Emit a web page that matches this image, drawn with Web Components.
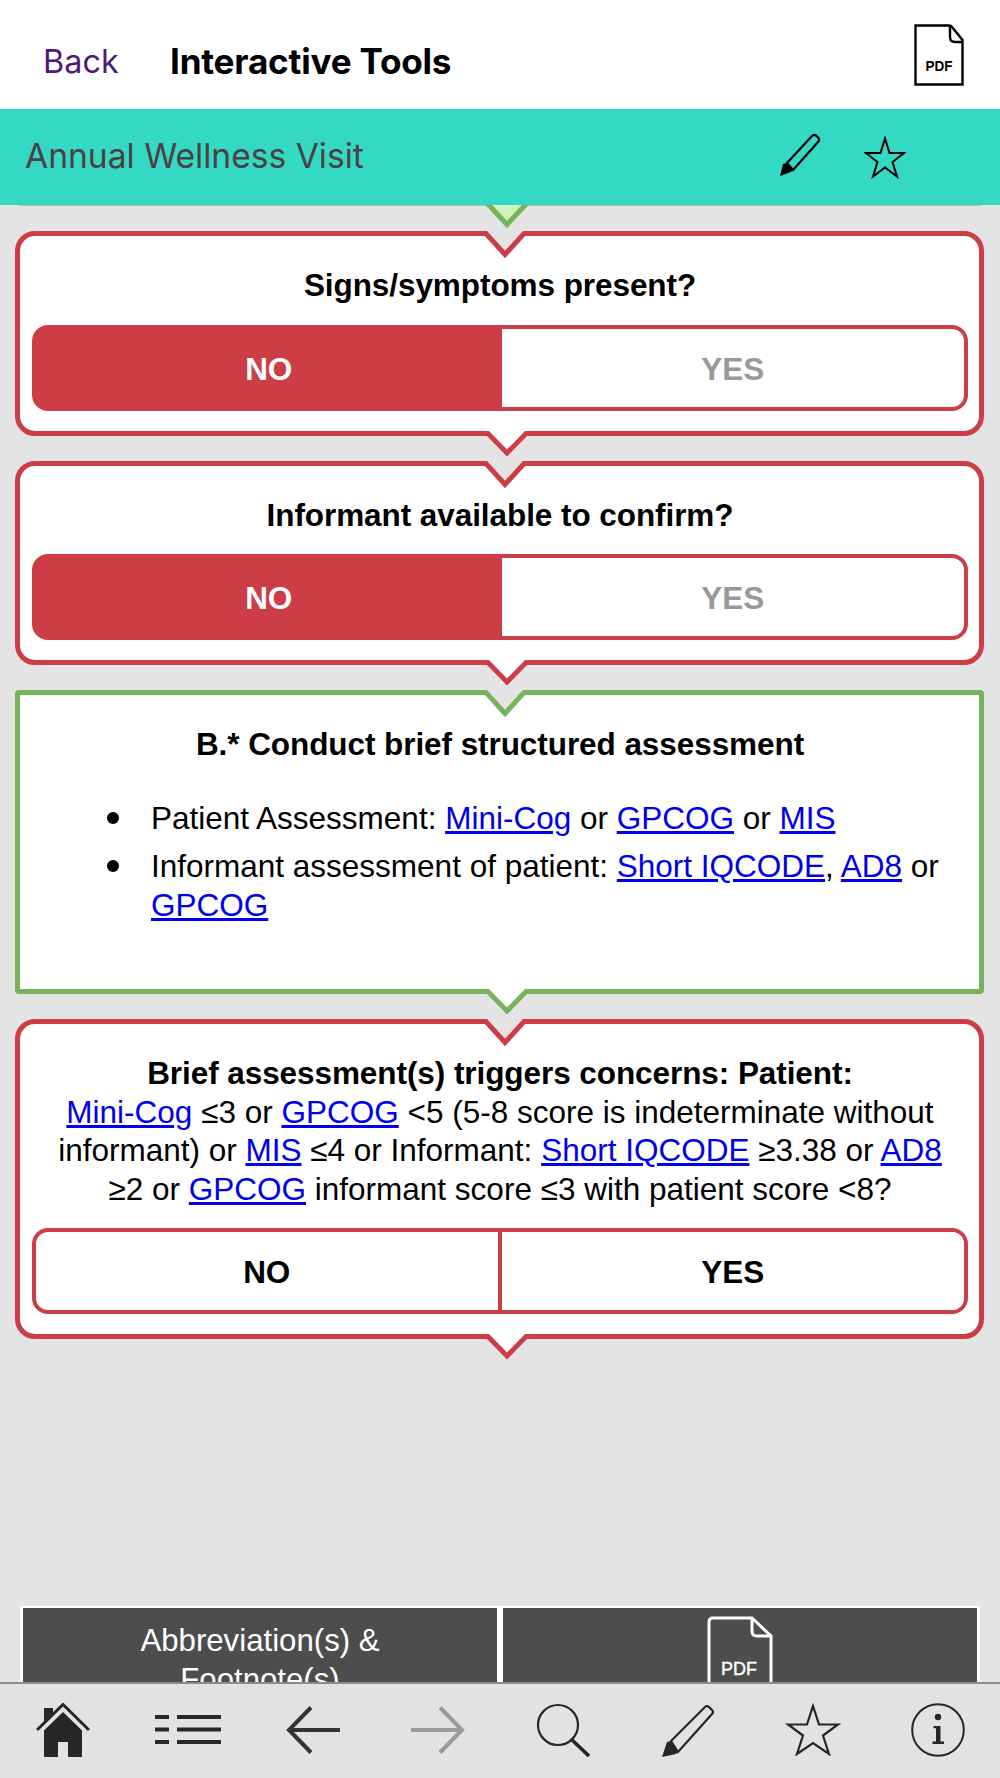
<!DOCTYPE html>
<html lang="en">
<head>
<meta charset="utf-8">
<title>Interactive Tools</title>
<style>
    html, body { margin: 0; height: 100%; background: #e4e4e4; }
    body { font-family: "Liberation Sans", Arial, sans-serif; color: #000; }
    b { letter-spacing: -0.07px; }
</style>
</head>
<body>
<app-shell>
    <top-bar slot="top" title="Interactive Tools"></top-bar>
    <sub-bar slot="top" title="Annual Wellness Visit"></sub-bar>

    <flow-tail></flow-tail>

    <flow-card tone="red">
        <question-text><b>Signs/symptoms present?</b></question-text>
        <yes-no picked="no"></yes-no>
    </flow-card>

    <flow-card tone="red">
        <question-text><b>Informant available to confirm?</b></question-text>
        <yes-no picked="no"></yes-no>
    </flow-card>

    <flow-card tone="green">
        <question-text><b>B.* Conduct brief structured assessment</b></question-text>
        <bullet-list>
            <bullet-item>Patient Assessment: <a href="#">Mini-Cog</a> or <a href="#">GPCOG</a> or <a href="#">MIS</a></bullet-item>
            <bullet-item>Informant assessment of patient: <a href="#">Short IQCODE</a>, <a href="#">AD8</a> or <a href="#">GPCOG</a></bullet-item>
        </bullet-list>
    </flow-card>

    <flow-card tone="red">
        <question-text><b>Brief assessment(s) triggers concerns: Patient:</b><br><a href="#">Mini-Cog</a> ≤3 or <a href="#">GPCOG</a> &lt;5 (5-8 score is indeterminate without informant) or <a href="#">MIS</a> ≤4 or Informant: <a href="#">Short IQCODE</a> ≥3.38 or <a href="#">AD8</a> ≥2 or <a href="#">GPCOG</a> informant score ≤3 with patient score &lt;8?</question-text>
        <yes-no></yes-no>
    </flow-card>

    <foot-buttons></foot-buttons>

    <tab-bar slot="bottom"></tab-bar>
</app-shell>

<script>
// Icon drawings, each one sized by its own viewBox
const ICONS = {
    home: '<svg width="54" height="54" viewBox="0 0 54 54"><path d="M1 27 L27 1.5 L53 27" fill="none" stroke="#262626" stroke-width="3"/><path d="M8 54 V27.5 L27 9 L46 27.5 V54 H32 V39 H22 V54 Z M8 5 H17 V11 L8 20 Z" fill="#262626"/></svg>',
    list: '<svg width="66" height="29" viewBox="0 0 66 29"><path d="M0 2 H14 M22 2 H66 M0 14.5 H14 M22 14.5 H66 M0 27 H14 M22 27 H66" stroke="#262626" stroke-width="4"/></svg>',
    back: '<svg width="54" height="48" viewBox="0 0 54 48"><path d="M54 24 H3 M25 1.5 L3 24 L25 46.5" fill="none" stroke="#333" stroke-width="4"/></svg>',
    forward: '<svg width="54" height="48" viewBox="0 0 54 48"><path d="M0 24 H51 M29 1.5 L51 24 L29 46.5" fill="none" stroke="#9b9b9b" stroke-width="4"/></svg>',
    search: '<svg width="54" height="54" viewBox="0 0 54 54"><circle cx="22" cy="22" r="20" fill="none" stroke="#262626" stroke-width="2.2"/><path d="M35 36 L53 53" stroke="#262626" stroke-width="3.6"/></svg>',
    pencil: '<svg width="54" height="54" viewBox="0 0 54 54"><path d="M10 38 L44 4 Q46 2 48 4 L51 7 Q53 9 51 11 L17 49 Z" fill="none" stroke="#262626" stroke-width="2.2"/><path d="M1 54 L6 39 L10 38 L17 49 L15 51 Z" fill="#262626"/></svg>',
    star: '<svg width="56" height="53" viewBox="0 0 56 53"><path d="M28 3 L34 21.5 H53 L38 32.5 L44 51 L28 40 L12 51 L18 32.5 L3 21.5 H22 Z" fill="none" stroke="#262626" stroke-width="2.2"/></svg>',
    info: '<svg width="54" height="54" viewBox="0 0 54 54"><circle cx="27" cy="27" r="25.8" fill="none" stroke="#262626" stroke-width="2"/><circle cx="27" cy="14" r="3.2" fill="#262626"/><path d="M22.5 23 H29.5 V38.5 H33 V41 H21.5 V38.5 H25 V25.2 H22.5 Z" fill="#262626"/></svg>',
    // Versiones pequeñas de la barra turquesa
    penSmall: '<svg width="42" height="43" viewBox="0 0 42 43"><path d="M8 30 L33 3 Q35 1 37 2.5 L39.5 5 Q41 7 39 9 L14 37 Z" fill="none" stroke="#000" stroke-width="2.2"/><path d="M1 43 L4 31 L8 30 L14 37 L12 39 Z" fill="#000"/></svg>',
    starSmall: '<svg width="42" height="43" viewBox="0 0 42 43"><path d="M21 2.5 L25.5 17 H40 L28.5 26 L33 40.5 L21 31.5 L9 40.5 L13.5 26 L2 17 H16.5 Z" fill="none" stroke="#000" stroke-width="2"/></svg>',
    pdfDark: '<svg width="50" height="62" viewBox="0 0 50 62"><path d="M1.5 1.5 H35 Q37 1.5 38 3 L48.5 16 V60.5 H1.5 Z" fill="#fff" stroke="#000" stroke-width="2.4"/><path d="M36 2 V13 Q36 18 41 18 H48.5" fill="none" stroke="#000" stroke-width="2.4"/><text x="25" y="47" text-anchor="middle" font-family="Liberation Sans" font-weight="700" font-size="15" textLength="27" lengthAdjust="spacingAndGlyphs">PDF</text></svg>',
    pdfLight: '<svg width="66" height="90" viewBox="0 0 66 90"><path d="M2 90 V6 Q2 2 6 2 H45 L64 20 V90" fill="none" stroke="#fff" stroke-width="3"/><path d="M45 2 V15 Q45 20 50 20 H64" fill="none" stroke="#fff" stroke-width="3"/><text x="32" y="59" text-anchor="middle" fill="#fff" font-family="Liberation Sans" font-size="18" stroke="#fff" stroke-width="0.4">PDF</text></svg>'
};

// Armazón de la pantalla: cabecera, zona central recortada y barra inferior
class AppShell extends HTMLElement {
    constructor() {
        super();
        this.attachShadow({ mode: 'open' });
    }

    connectedCallback() {
        this.shadowRoot.innerHTML = `
            <style>
                :host { display: flex; flex-direction: column; height: 100vh; overflow: hidden; background: #e4e4e4; }
                main { flex: 1; min-height: 0; overflow: hidden; display: flex; flex-direction: column; gap: 25px; }
                ::slotted(flow-tail) { margin-bottom: -25px; }
            </style>
            <slot name="top"></slot>
            <main><slot></slot></main>
            <slot name="bottom"></slot>
        `;
    }
}

class TopBar extends HTMLElement {
    constructor() {
        super();
        this.attachShadow({ mode: 'open' });
    }

    connectedCallback() {
        this.shadowRoot.innerHTML = `
            <style>
                :host { display: flex; align-items: center; height: 109px; background: #fff; padding: 0 36px 0 43px; flex: none;
                    font-family: Inter, "Noto Sans", sans-serif; }
                .back { color: #4f1a78; width: 127px; font-size: 32.4px; margin-top: 14px; }
                .title { font-weight: 700; color: #000; font-size: 35.1px; margin-top: 12px; letter-spacing: -0.2px; }
                .pdf { margin-left: auto; display: flex; }
            </style>
            <span class="back">Back</span>
            <span class="title">${this.getAttribute('title')}</span>
            <span class="pdf">${ICONS.pdfDark}</span>
        `;
    }
}

class SubBar extends HTMLElement {
    constructor() {
        super();
        this.attachShadow({ mode: 'open' });
    }

    connectedCallback() {
        this.shadowRoot.innerHTML = `
            <style>
                :host { display: flex; align-items: center; gap: 43px; height: 96px; background: #34d9c3; padding: 0 94px 0 25px; flex: none;
                    font-family: Inter, "Noto Sans", sans-serif; font-size: 33.6px; color: #4b4047; }
                .title { margin-right: auto; margin-bottom: 3px; }
                svg { display: block; }
                svg:first-of-type { margin-bottom: 6px; }
            </style>
            <span class="title">${this.getAttribute('title')}</span>
            ${ICONS.penSmall}
            ${ICONS.starSmall}
        `;
    }
}

// Restos de la tarjeta anterior, casi toda oculta bajo la barra turquesa
class FlowTail extends HTMLElement {
    constructor() {
        super();
        this.attachShadow({ mode: 'open' });
    }

    connectedCallback() {
        this.shadowRoot.innerHTML = `
            <style>
                :host { display: block; height: 26px; flex: none; }
                .line { height: 1px; margin: 0 19px; background: #a9cb91; }
                svg { display: block; margin-left: 486px; margin-top: -1px; }
            </style>
            <div class="line"></div>
            <svg width="42" height="24" viewBox="0 0 42 24"><path d="M0 -3 L21 19.5 L42 -3" fill="#d3f2c0" stroke="#77b25c" stroke-width="5"/></svg>
        `;
    }
}

// Tarjeta del algoritmo con sus dos muescas
class FlowCard extends HTMLElement {
    constructor() {
        super();
        this.attachShadow({ mode: 'open' });
    }

    connectedCallback() {
        const green = this.getAttribute('tone') === 'green';
        const color = green ? '#77b25c' : '#cc3d45';
        this.shadowRoot.innerHTML = `
            <style>
                :host { display: block; flex: none; margin: 0 16px 0 15px; }
                .box { position: relative; background: #fff; border: 5px solid ${color}; border-radius: ${green ? 4 : 20}px;
                    padding: 30px 11px 20px 12px; box-sizing: border-box; display: flex; flex-direction: column; gap: 20px; ${green ? 'height: 304px;' : ''} }
                .in, .out { position: absolute; display: block; }
                .in { left: 461px; top: -5px; }
                .out { left: 466px; bottom: -26px; }
            </style>
            <div class="box">
                <svg class="in" width="48" height="27" viewBox="0 0 48 27"><path d="M-1 -4 L24 23.5 L49 -4" fill="#e4e4e4" stroke="${color}" stroke-width="5"/></svg>
                <slot></slot>
                <svg class="out" width="42" height="26" viewBox="0 0 42 26"><path d="M-1.5 -1 L21 22 L43.5 -1" fill="#fff" stroke="${color}" stroke-width="5"/></svg>
            </div>
        `;
    }
}

class QuestionText extends HTMLElement {
    constructor() {
        super();
        this.attachShadow({ mode: 'open' });
    }

    connectedCallback() {
        this.shadowRoot.innerHTML = `
            <style>
                :host { display: block; padding: 0 19px; text-align: center; font-size: 31.5px; line-height: 38.5px; }
            </style>
            <slot></slot>
        `;
    }
}

class BulletList extends HTMLElement {
    constructor() {
        super();
        this.attachShadow({ mode: 'open' });
    }

    connectedCallback() {
        this.shadowRoot.innerHTML = `
            <style>
                :host { display: flex; flex-direction: column; gap: 9px; font-size: 31.5px; line-height: 39px; margin-top: 15px; padding: 0 12px 0 75px; }
            </style>
            <slot></slot>
        `;
    }
}

// Una línea de la lista, con su punto a la izquierda
class BulletItem extends HTMLElement {
    constructor() {
        super();
        this.attachShadow({ mode: 'open' });
    }

    connectedCallback() {
        this.shadowRoot.innerHTML = `
            <style>
                :host { display: grid; grid-template-columns: 44px 1fr; }
                i { width: 12px; height: 12px; border-radius: 50%; background: #000; margin-top: 13px; }
            </style>
            <i></i>
            <div><slot></slot></div>
        `;
    }
}

// Selector NO / YES; con "picked" la opción NO queda rellena en rojo
class YesNo extends HTMLElement {
    constructor() {
        super();
        this.attachShadow({ mode: 'open' });
    }

    connectedCallback() {
        const picked = this.getAttribute('picked') === 'no';
        this.shadowRoot.innerHTML = `
            <style>
                :host { display: block; }
                .wrap { display: grid; grid-template-columns: 465.5px 1fr; height: 86px; box-sizing: border-box; border: 4.5px solid #cc3d45; border-radius: 16px;
                    overflow: hidden; font-size: 31.5px; font-weight: 700; background: ${picked ? '#cc3d45' : '#fff'}; }
                .opt { display: flex; align-items: center; justify-content: center; padding-top: 3px; }
                .no { color: ${picked ? '#fff' : '#000'}; ${picked ? '' : 'border-right: 4.5px solid #cc3d45;'} }
                .yes { color: ${picked ? '#999' : '#000'}; background: #fff; }
            </style>
            <div class="wrap">
                <span class="opt no">NO</span>
                <span class="opt yes">YES</span>
            </div>
        `;
    }
}

class FootButtons extends HTMLElement {
    constructor() {
        super();
        this.attachShadow({ mode: 'open' });
    }

    connectedCallback() {
        this.shadowRoot.innerHTML = `
            <style>
                :host { display: grid; grid-template-columns: 1fr 1fr; gap: 6px; flex: none; margin: 242px 20px 0; padding: 2px 3px; background: #fff; height: 150px;
                    color: #fff; font-size: 31.2px; line-height: 39px; text-align: center; }
                div { background: #4d4d4d; }
                .abbr { padding: 13px 90px 0; }
                .pdf { padding-top: 8px; }
                svg { display: block; margin: 0 auto; }
            </style>
            <div class="abbr">Abbreviation(s) &amp; Footnote(s)</div>
            <div class="pdf">${ICONS.pdfLight}</div>
        `;
    }
}

class TabBar extends HTMLElement {
    constructor() {
        super();
        this.attachShadow({ mode: 'open' });
    }

    connectedCallback() {
        const names = ['home', 'list', 'back', 'forward', 'search', 'pencil', 'star', 'info'];
        this.shadowRoot.innerHTML = `
            <style>
                :host { display: grid; grid-template-columns: repeat(8, 125px); height: 96px; box-sizing: border-box; flex: none; position: relative;
                    background: #e2e2e2; border-top: 2px solid #8c8c8c; }
                span { display: flex; align-items: center; justify-content: center; margin-top: -3px; }
            </style>
            ${names.map((name) => `<span>${ICONS[name]}</span>`).join('')}
        `;
    }
}

customElements.define('app-shell', AppShell);
customElements.define('top-bar', TopBar);
customElements.define('sub-bar', SubBar);
customElements.define('flow-tail', FlowTail);
customElements.define('flow-card', FlowCard);
customElements.define('question-text', QuestionText);
customElements.define('bullet-list', BulletList);
customElements.define('bullet-item', BulletItem);
customElements.define('yes-no', YesNo);
customElements.define('foot-buttons', FootButtons);
customElements.define('tab-bar', TabBar);
</script>
</body>
</html>
